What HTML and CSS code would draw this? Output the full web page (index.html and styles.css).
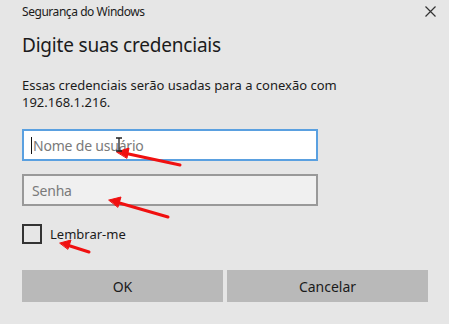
FILE: index.html
```html
<!DOCTYPE html>
<html lang="pt-BR">
<head>
    <meta charset="UTF-8">
    <title>Segurança do Windows</title>
    <link rel="stylesheet" href="styles.css">
</head>
<body>
    <div class="dialog">
        <div class="titlebar">
            <span class="app-name">Segurança do Windows</span>
            <svg class="close" width="11" height="11" viewBox="0 0 11 11">
                <path d="M0.5 0.5 L10.5 10.5 M10.5 0.5 L0.5 10.5" stroke="#333" stroke-width="1.2" fill="none"/>
            </svg>
        </div>
        <h1 class="heading">Digite suas credenciais</h1>
        <p class="message">Essas credenciais serão usadas para a conexão com<br>192.168.1.216.</p>

        <div class="field field-active">
            <span class="caret"></span>
            <span class="placeholder">Nome de usuário</span>
        </div>
        <div class="field">
            <span class="placeholder">Senha</span>
        </div>

        <label class="remember">
            <span class="checkbox"></span>
            <span>Lembrar-me</span>
        </label>

        <div class="actions">
            <button class="btn">OK</button>
            <button class="btn">Cancelar</button>
        </div>
    </div>

    <!-- red annotation arrows drawn over the screenshot -->
    <svg class="marks" width="449" height="324" viewBox="0 0 449 324">
        <g stroke="#f01010" stroke-width="3" stroke-linecap="round" fill="#f01010">
            <line x1="180" y1="165" x2="124" y2="153"/>
            <polygon points="117,152 129,148 127,158" stroke-width="1"/>
            <line x1="168" y1="217" x2="116" y2="202"/>
            <polygon points="109,200 121,197 118,207" stroke-width="1"/>
            <line x1="89" y1="252" x2="67" y2="245"/>
            <polygon points="60,243 71,240 68,249" stroke-width="1"/>
        </g>
        <path class="ibeam" d="M116 138 h3 M122 138 h-3 M119 138 v13 M116 151 h3 M122 151 h-3" stroke="#222" stroke-width="1.3" fill="none"/>
    </svg>
</body>
</html>
```

FILE: styles.css
```css
body {
    margin: 0;
    background-color: #e6e6e6;
    font-family: "Noto Sans", "Open Sans", sans-serif;
    color: #1b1b1b;
}
.dialog {
    width: 449px;
    height: 324px;
    box-sizing: border-box;
    padding: 3px 21px 0 22px;
    display: flex;
    flex-direction: column;
}
.titlebar {
    display: flex;
    justify-content: space-between;
    align-items: center;
    height: 17px;
}
.app-name {
    font-size: 12px;
    letter-spacing: -0.45px;
}
.close {
    margin-right: -8px;
}
.heading {
    margin: 12px 0 0 0;
    font-size: 19px;
    font-weight: normal;
    line-height: 26px;
    letter-spacing: -0.2px;
}
.message {
    margin: 19px 0 0 0;
    font-size: 13px;
    line-height: 17px;
    letter-spacing: 0;
}
.field {
    width: 296px;
    height: 32px;
    box-sizing: border-box;
    border: 2px solid #999;
    background-color: #f0f0f0;
    display: flex;
    align-items: center;
    padding-left: 8px;
    margin-top: 13px;
}
.field-active {
    margin-top: 18px;
    border-color: #5aa0e0;
    background-color: #fff;
    padding-left: 7px;
}
.placeholder {
    font-size: 14px;
    color: #7a7a7a;
    letter-spacing: -0.2px;
}
.caret {
    width: 1px;
    height: 17px;
    background-color: #111;
    margin-right: 1px;
}
.remember {
    display: flex;
    align-items: center;
    gap: 8px;
    margin-top: 18px;
    font-size: 13px;
}
.checkbox {
    width: 20px;
    height: 20px;
    box-sizing: border-box;
    border: 2px solid #333;
}
.actions {
    display: grid;
    grid-template-columns: 1fr 1fr;
    gap: 4px;
    margin-top: 26px;
}
.btn {
    height: 32px;
    border: none;
    background-color: #b9b9b9;
    font-family: inherit;
    font-size: 14px;
    color: #1b1b1b;
}
.marks {
    position: absolute;
    left: 0;
    top: 0;
    pointer-events: none;
}
```
